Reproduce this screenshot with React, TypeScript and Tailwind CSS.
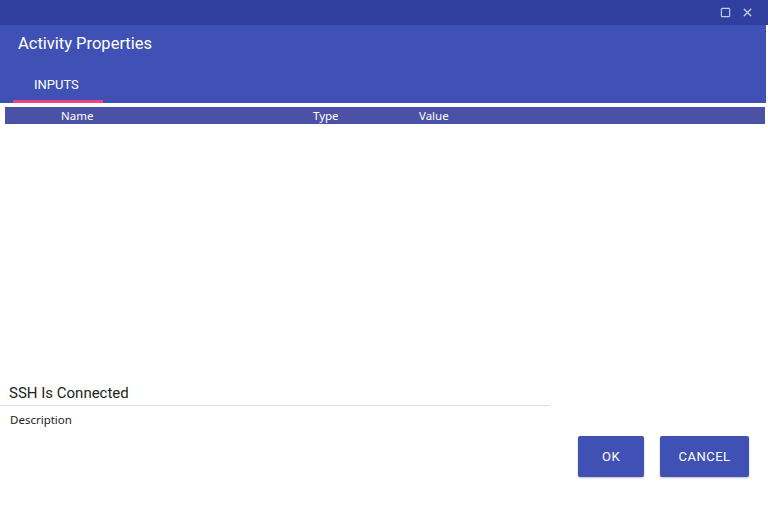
import { Square, X } from "lucide-react";

export default function App() {
  return (
    <div className="flex h-[523px] w-[768px] flex-col overflow-hidden bg-white font-['Roboto',sans-serif]">
      {/* window bar */}
      <div className="flex h-[25px] items-center justify-end gap-[10px] bg-[#303f9f] pr-[14px] text-[#c5cae9]">
        <Square size={11} strokeWidth={2.6} />
        <X size={13} strokeWidth={2.6} />
      </div>

      {/* dialog header with tabs */}
      <div className="mr-[2px] flex h-[78px] flex-col bg-[#3f51b5]">
        <h1 className="pl-[18px] pt-[10px] text-[16.5px] leading-[18px] text-white">
          Activity Properties
        </h1>
        <div className="mt-auto flex pl-[13px]">
          <div className="flex h-[36px] w-[90px] flex-col justify-between">
            <span className="pl-[21px] pt-[10px] text-[13px] leading-[15px] text-white">
              INPUTS
            </span>
            <div className="h-[3px] bg-[#f0407f]" />
          </div>
        </div>
      </div>

      {/* table header */}
      <div className="ml-[5px] mr-[3px] mt-[4px] flex h-[17px] items-center bg-[#4b52a5] font-['Noto_Sans',sans-serif] text-[11.5px] text-white">
        <span className="ml-[56px] w-[252px]">Name</span>
        <span className="w-[106px]">Type</span>
        <span>Value</span>
      </div>

      <div className="h-[260px]" />

      {/* activity summary */}
      <div className="w-[550px]">
        <div className="border-b border-[#dcdcdc] pb-[3px] pl-[9px] text-[15px] leading-[18px] text-[#212121]">
          SSH Is Connected
        </div>
        <div className="pl-[10px] pt-[6px] font-['Noto_Sans',sans-serif] text-[11.5px] leading-[15px] text-[#222]">
          Description
        </div>
      </div>

      <div className="mt-[9px] flex justify-end gap-[16px] pr-[19px]">
        <button className="h-[41px] w-[66px] rounded-[2px] bg-[#3f51b5] text-[13px] tracking-[0.5px] text-white shadow-[0_1px_2px_rgba(0,0,0,0.25)]">
          OK
        </button>
        <button className="h-[41px] w-[89px] rounded-[2px] bg-[#3f51b5] text-[13px] tracking-[0.5px] text-white shadow-[0_1px_2px_rgba(0,0,0,0.25)]">
          CANCEL
        </button>
      </div>
    </div>
  );
}
